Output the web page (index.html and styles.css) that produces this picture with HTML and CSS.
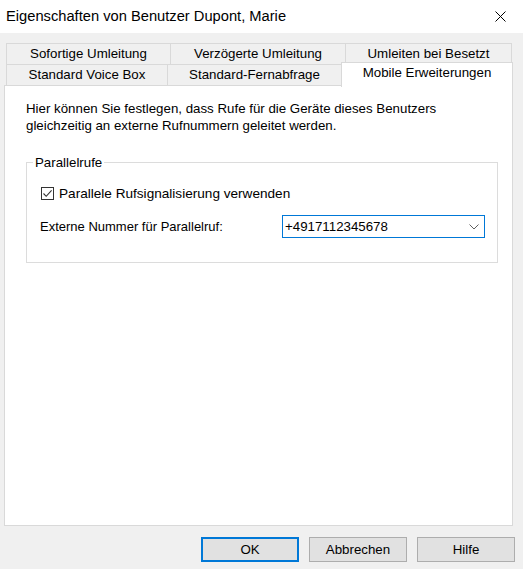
FILE: index.html
```html
<!DOCTYPE html>
<html lang="de">
<head>
    <meta charset="UTF-8">
    <title>Eigenschaften von Benutzer Dupont, Marie</title>
    <link rel="stylesheet" href="styles.css">
</head>
<body>
    <div class="dialog">
        <div class="titlebar">
            <span class="title">Eigenschaften von Benutzer Dupont, Marie</span>
            <svg class="close" width="11" height="11" viewBox="0 0 11 11">
                <path d="M0.5 0.5 L10.5 10.5 M10.5 0.5 L0.5 10.5" stroke="#000" stroke-width="1" fill="none"/>
            </svg>
        </div>

        <div class="tabs">
            <div class="tab-row">
                <div class="tab t1">Sofortige Umleitung</div>
                <div class="tab t2">Verzögerte Umleitung</div>
                <div class="tab t3">Umleiten bei Besetzt</div>
            </div>
            <div class="tab-row">
                <div class="tab t4">Standard Voice Box</div>
                <div class="tab t5">Standard-Fernabfrage</div>
                <div class="tab active">Mobile Erweiterungen</div>
            </div>
        </div>

        <div class="panel">
            <p class="intro">Hier können Sie festlegen, dass Rufe für die Geräte dieses Benutzers<br>gleichzeitig an externe Rufnummern geleitet werden.</p>

            <fieldset class="group">
                <legend>Parallelrufe</legend>
                <label class="check-row">
                    <span class="checkbox">
                        <svg width="11" height="11" viewBox="0 0 11 11">
                            <path d="M1.5 5.5 L4.2 8.3 L9.6 2.4" stroke="#333" stroke-width="1.1" fill="none"/>
                        </svg>
                    </span>
                    Parallele Rufsignalisierung verwenden
                </label>
                <div class="field-row">
                    <span class="field-label">Externe Nummer für Parallelruf:</span>
                    <div class="combo">
                        <span>+4917112345678</span>
                        <svg width="10" height="6" viewBox="0 0 10 6">
                            <path d="M0.5 0.5 L5 5 L9.5 0.5" stroke="#606060" stroke-width="1" fill="none"/>
                        </svg>
                    </div>
                </div>
            </fieldset>
        </div>

        <div class="buttons">
            <button class="btn default">OK</button>
            <button class="btn">Abbrechen</button>
            <button class="btn">Hilfe</button>
        </div>
    </div>
</body>
</html>
```

FILE: styles.css
```css
* {
    box-sizing: border-box;
}

body {
    margin: 0;
    font-family: 'Liberation Sans', Arial, sans-serif;
    font-size: 13.3px;
    color: #000;
    background: #f0f0f0;
}

.dialog {
    width: 523px;
    height: 569px;
    background: #f0f0f0;
}

/* window caption */
.titlebar {
    height: 33px;
    background: #fff;
    display: flex;
    align-items: center;
    justify-content: space-between;
    padding: 0 17px 1px 6px;
}

.title {
    font-size: 14.7px;
}

/* tab strip, two rows */
.tabs {
    padding: 10px 0 0 6px;
}

.tab-row {
    display: flex;
    height: 21px;
}

.tab {
    height: 21px;
    border: 1px solid #d9d9d9;
    border-bottom: none;
    background: #f0f0f0;
    text-align: center;
    line-height: 20px;
    margin-left: -1px;
}

.tab-row .tab:first-child {
    margin-left: 0;
}

.t1 { width: 165px; }
.t2 { width: 176px; }
.t3 { width: 167px; }
.t4 { width: 162px; }
.t5 { width: 175px; }

.tab.active {
    position: relative;
    z-index: 1;
    width: 172px;
    height: 25px;
    margin-top: -2px;
    background: #fff;
    line-height: 19px;
}

.panel {
    margin-left: 4px;
    width: 509px;
    height: 441px;
    background: #fff;
    border: 1px solid #d9d9d9;
    padding: 14px 0 0 21px;
}

.intro {
    margin: 0;
    line-height: 17px;
}

.group {
    margin: 20px 0 0 0;
    width: 472px;
    border: 1px solid #dcdcdc;
    padding: 0 0 24px 0;
}

.group legend {
    margin-left: 6px;
    padding: 0 2px;
    line-height: 17px;
}

.check-row {
    display: flex;
    align-items: center;
    gap: 5px;
    margin: 14px 0 0 14px;
    height: 17px;
    font-size: 13.6px;
}

.checkbox {
    width: 13px;
    height: 13px;
    border: 1px solid #333;
    display: flex;
    align-items: center;
    justify-content: center;
}

.field-row {
    display: flex;
    align-items: center;
    justify-content: space-between;
    margin: 13px 12px 0 13px;
}

.field-label {
    font-size: 13px;
}

.combo {
    width: 203px;
    height: 23px;
    border: 1px solid #0078d7;
    display: flex;
    align-items: center;
    justify-content: space-between;
    padding: 0 5px 0 2px;
}

.buttons {
    display: flex;
    justify-content: flex-end;
    gap: 10px;
    padding: 11px 8px 0 0;
}

.btn {
    width: 98px;
    height: 25px;
    font-family: inherit;
    font-size: 13.3px;
    color: #000;
    background: #e1e1e1;
    border: 1px solid #adadad;
    padding: 0;
}

.btn.default {
    border: 2px solid #0078d7;
}
```
